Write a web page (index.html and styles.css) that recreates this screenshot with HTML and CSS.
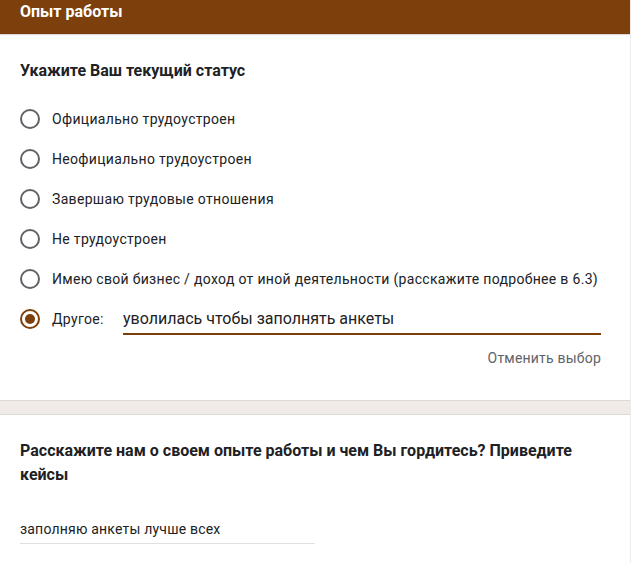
FILE: index.html
```html
<!DOCTYPE html>
<html lang="ru">
<head>
    <meta charset="UTF-8">
    <meta name="viewport" content="width=device-width, initial-scale=1.0">
    <title>Опыт работы</title>
    <link rel="stylesheet" href="styles.css">
</head>
<body>
    <div class="card">
        <div class="header">Опыт работы</div>
        <div class="question">
            <div class="title">Укажите Ваш текущий статус</div>
            <div class="options">
                <label class="option"><span class="radio"></span>Официально трудоустроен</label>
                <label class="option"><span class="radio"></span>Неофициально трудоустроен</label>
                <label class="option"><span class="radio"></span>Завершаю трудовые отношения</label>
                <label class="option"><span class="radio"></span>Не трудоустроен</label>
                <label class="option"><span class="radio"></span>Имею свой бизнес / доход от иной деятельности (расскажите подробнее в 6.3)</label>
                <div class="option other">
                    <span class="radio checked"></span>
                    <span class="other-label">Другое:</span>
                    <div class="other-input">уволилась чтобы заполнять анкеты</div>
                </div>
            </div>
            <div class="clear-row"><span class="clear">Отменить выбор</span></div>
        </div>
    </div>
    <div class="card second">
        <div class="question">
            <div class="title">Расскажите нам о своем опыте работы и чем Вы гордитесь? Приведите кейсы</div>
            <div class="answer">заполняю анкеты лучше всех</div>
        </div>
    </div>
</body>
</html>
```

FILE: styles.css
```css
body {
    margin: 0;
    background: #f0ebe6;
    font-family: Roboto, "Liberation Sans", sans-serif;
    color: #202124;
    width: 630px;
}
.card {
    background: #fff;
    border-bottom: 1px solid #dcd8d3;
}
.second {
    margin-top: 13px;
    border-top: 1px solid #dcd8d3;
    border-bottom: none;
    padding-bottom: 40px;
}
.header {
    background: #7d3f0c;
    color: #fff;
    font-weight: 700;
    font-size: 16px;
    height: 34px;
    line-height: 24px;
    padding: 0 20px;
    box-shadow: 0 1px 1px rgba(0, 0, 0, 0.15);
}
.question {
    padding: 25px 29px 0 20px;
}
.title {
    font-weight: 700;
    font-size: 16px;
    line-height: 24px;
}
.options {
    margin-top: 24px;
    display: flex;
    flex-direction: column;
    gap: 16px;
}
.option {
    display: flex;
    align-items: center;
    height: 24px;
    font-size: 14px;
    letter-spacing: 0.32px;
}
.radio {
    width: 16px;
    height: 16px;
    border: 2px solid #5f6368;
    border-radius: 50%;
    margin-right: 12px;
    flex: none;
    position: relative;
}
.radio.checked {
    border-color: #7d3f0c;
}
.radio.checked::after {
    content: "";
    position: absolute;
    left: 3px;
    top: 3px;
    width: 10px;
    height: 10px;
    border-radius: 50%;
    background: #7d3f0c;
}
.other-label {
    width: 71px;
    flex: none;
}
.other-input {
    flex: 1;
    font-size: 16px;
    letter-spacing: 0;
    height: 22px;
    line-height: 22px;
    padding-bottom: 3px;
    border-bottom: 2px solid #7d3f0c;
    margin-top: 5px;
}
.clear-row {
    display: flex;
    justify-content: flex-end;
    padding: 17px 0 32px;
}
.clear {
    font-size: 14px;
    line-height: 20px;
    color: #5f6368;
    letter-spacing: 0.2px;
}
.second .question {
    padding-top: 24px;
}
.answer {
    margin-top: 32px;
    width: 295px;
    font-size: 14px;
    line-height: 20px;
    letter-spacing: 0.2px;
    padding-bottom: 4px;
    border-bottom: 1px solid #e0e0e0;
}
```
